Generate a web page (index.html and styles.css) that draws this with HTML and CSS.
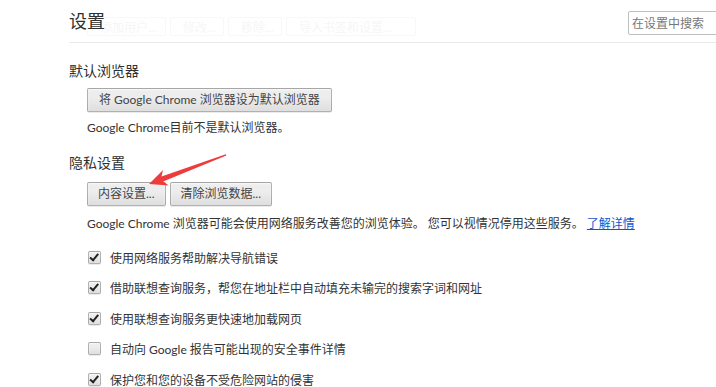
FILE: index.html
```html
<!DOCTYPE html>
<html lang="zh-CN">
<head>
    <meta charset="UTF-8">
    <title>设置</title>
    <link rel="stylesheet" href="styles.css">
</head>
<body>
  <div class="page">
    <header class="top">
      <div class="title-cell">
        <div class="ghost-row">
          <span class="ghost btn-add">添加用户...</span>
          <span class="ghost btn-edit">修改...</span>
          <span class="ghost btn-del">移除...</span>
          <span class="ghost btn-import">导入书签和设置...</span>
        </div>
        <h1 class="title">设置</h1>
      </div>
      <input class="search" type="search" placeholder="在设置中搜索">
    </header>

    <section class="block first">
      <h3>默认浏览器</h3>
      <div class="indent">
        <button class="btn">将 Google Chrome 浏览器设为默认浏览器</button>
        <p class="note">Google Chrome目前不是默认浏览器。</p>
      </div>
    </section>

    <section class="block">
      <h3>隐私设置</h3>
      <div class="indent">
        <div class="btn-row">
          <button class="btn">内容设置...</button>
          <button class="btn">清除浏览数据...</button>
        </div>
        <p class="desc">Google Chrome 浏览器可能会使用网络服务改善您的浏览体验。 您可以视情况停用这些服务。 <a href="#">了解详情</a></p>

        <div class="checks">
          <label class="check"><span class="box on"></span>使用网络服务帮助解决导航错误</label>
          <label class="check"><span class="box on"></span>借助联想查询服务，帮您在地址栏中自动填充未输完的搜索字词和网址</label>
          <label class="check"><span class="box on"></span>使用联想查询服务更快速地加载网页</label>
          <label class="check"><span class="box"></span>自动向 Google 报告可能出现的安全事件详情</label>
          <label class="check"><span class="box on"></span>保护您和您的设备不受危险网站的侵害</label>
        </div>
      </div>
    </section>
  </div>

  <svg class="arrow" width="716" height="387" viewBox="0 0 716 387">
    <polygon points="149,184 163,170 161.5,176.6 225.8,154.3 226.3,155.6 163.2,181.6 168.8,185.6" fill="#ee3b3b"/>
  </svg>
</body>
</html>
```

FILE: styles.css
```css
html, body {
    margin: 0;
    padding: 0;
}
body {
    width: 716px;
    height: 387px;
    overflow: hidden;
    background: #fff;
    color: #303030;
    font-family: Lato, "Noto Sans CJK SC", sans-serif;
    font-size: 12px;
    position: relative;
}
.page {
    padding-left: 69px;
}

/* header */
.top {
    display: flex;
    justify-content: space-between;
    align-items: flex-start;
    height: 42px;
    border-bottom: 1px solid #eaeaea;
}
.title-cell {
    display: grid;
}
.title-cell > * {
    grid-area: 1 / 1;
}
.title {
    margin: 0;
    padding-top: 9px;
    font-size: 18px;
    font-weight: normal;
    line-height: 24px;
    color: #303030;
}
.ghost-row {
    display: flex;
    gap: 4px;
    margin-left: 18px;
    margin-top: 17px;
    white-space: nowrap;
}
.ghost {
    height: 19px;
    box-sizing: border-box;
    padding: 2px 12px 0;
    border: 1px solid #f8f8f8;
    border-radius: 2px;
    color: #f6f6f6;
    font-size: 12px;
    line-height: 16px;
}
.btn-add { width: 79px; }
.btn-edit { width: 54px; }
.btn-del { width: 54px; }
.btn-import { width: 130px; }

.search {
    margin-top: 11px;
    margin-right: -30px;
    width: 118px;
    height: 24px;
    box-sizing: border-box;
    border: 1px solid #bfbfbf;
    border-radius: 2px;
    padding: 0 3px;
    font-family: inherit;
    font-size: 12px;
    outline: none;
}
.search::placeholder {
    color: #777;
}

/* sections */
.block h3 {
    margin: 0;
    font-size: 14px;
    font-weight: normal;
    line-height: 20px;
    color: #303030;
}
.block.first {
    margin-top: 18px;
}
.block {
    margin-top: 16px;
}
.indent {
    padding-left: 18px;
}
.btn {
    height: 24px;
    box-sizing: border-box;
    margin-top: 7px;
    padding: 0 11px;
    border: 1px solid rgba(0, 0, 0, 0.25);
    border-radius: 2px;
    background-image: linear-gradient(#ededed, #ededed 38%, #dedede);
    box-shadow: 0 1px 0 rgba(0, 0, 0, 0.08), inset 0 1px 2px rgba(255, 255, 255, 0.75);
    color: #444;
    font-family: inherit;
    font-size: 12px;
    line-height: 20px;
}
.btn-row {
    display: flex;
    gap: 4px;
    margin-top: 9px;
}
.btn-row .btn {
    margin-top: 0;
    padding: 0 10px;
}
.note, .desc {
    margin: 7px 0 0;
    line-height: 18px;
    color: #333;
}
.desc {
    margin-top: 9px;
}
.desc a {
    color: #15c;
}

.checks {
    margin-top: 9px;
}
.check {
    display: flex;
    align-items: center;
    height: 30.5px;
    color: #333;
}
.box {
    width: 13px;
    height: 13px;
    box-sizing: border-box;
    margin-left: 1px;
    margin-right: 9px;
    border: 1px solid rgba(0, 0, 0, 0.25);
    border-radius: 2px;
    background-image: linear-gradient(#ededed, #ededed 38%, #dedede);
    box-shadow: 0 1px 0 rgba(0, 0, 0, 0.08), inset 0 1px 2px rgba(255, 255, 255, 0.75);
    position: relative;
}
.box.on::after {
    content: "";
    position: absolute;
    left: 2px;
    top: 0px;
    width: 3px;
    height: 7px;
    border: solid #222;
    border-width: 0 2.5px 2.5px 0;
    transform: rotate(40deg);
    transform-origin: 60% 60%;
}

.arrow {
    position: absolute;
    left: 0;
    top: 0;
    pointer-events: none;
}
```
